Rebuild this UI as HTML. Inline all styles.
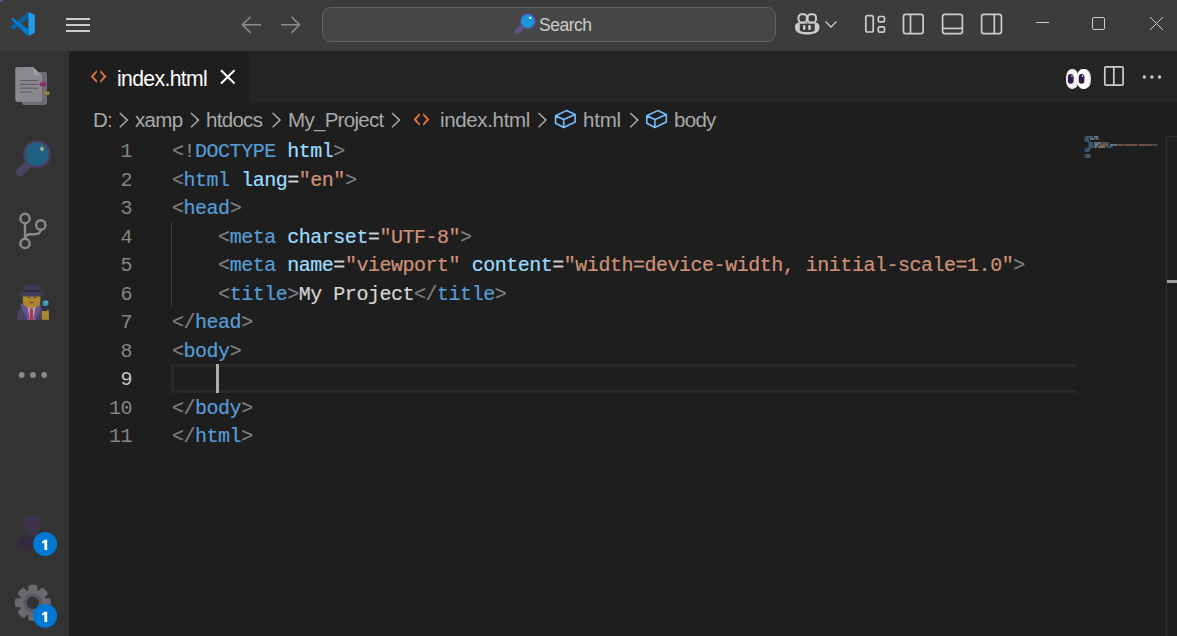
<!DOCTYPE html>
<html><head><meta charset="utf-8">
<style>
*{margin:0;padding:0;box-sizing:border-box}
html,body{width:1177px;height:636px;overflow:hidden;background:#1e1e1e;font-family:"Liberation Sans",sans-serif}
.abs{position:absolute}
svg{position:absolute;overflow:visible}
#title{position:absolute;left:0;top:0;width:1177px;height:51px;background:#3c3c3c}
#act{position:absolute;left:0;top:51px;width:69px;height:585px;background:#333333}
#tabs{position:absolute;left:69px;top:51px;width:1108px;height:52px;background:#252526}
#tab{position:absolute;left:0;top:0;width:180px;height:52px;background:#1e1e1e}
.code{position:absolute;left:172px;font-family:"Liberation Mono",monospace;font-size:20px;letter-spacing:-0.48px;white-space:pre;color:#d4d4d4;line-height:28.5px;-webkit-text-stroke:0.2px currentColor}
.ln{position:absolute;left:69px;width:63px;text-align:right;font-family:"Liberation Mono",monospace;font-size:20px;letter-spacing:-0.48px;color:#858585;line-height:28.5px}
.b{color:#808080}.t{color:#569cd6}.a{color:#9cdcfe}.s{color:#ce9178}
.ui{position:absolute;font-family:"Liberation Sans",sans-serif;font-size:20.5px;letter-spacing:-0.7px;line-height:22px;white-space:pre;color:#a9a9a9}
</style></head><body>
<div id="title"></div>
<div id="act"></div>
<div id="tabs"><div id="tab"></div></div>

<!-- ===== TITLE BAR ===== -->
<div class="abs" style="left:-2px;top:-2px;width:5px;height:4px;border-radius:0 0 3px 0;background:#5a5a98"></div>
<svg style="left:0;top:0" width="40" height="50" viewBox="0 0 40 50">
  <polygon points="28.5,12 28.5,17.6 15.2,28.4 13,29.8 11,28 11.2,26.6" fill="#0065a9"/>
  <polygon points="11,19.6 13,17.8 28.5,29.5 28.5,35.7 26.5,35" fill="#007acc"/>
  <polygon points="28.5,11.9 34.8,15.1 34.8,32.8 28.5,35.8" fill="#1f9cf0"/>
</svg>
<div class="abs" style="left:66px;top:18px;width:24px;height:2px;background:#cccccc"></div>
<div class="abs" style="left:66px;top:24px;width:24px;height:2px;background:#cccccc"></div>
<div class="abs" style="left:66px;top:30px;width:24px;height:2px;background:#cccccc"></div>

<svg style="left:0;top:0" width="1177" height="51" viewBox="0 0 1177 51">
  <g stroke="#8b8b8b" stroke-width="1.6" fill="none" stroke-linecap="butt">
    <path d="M261,24.8 H242.5 M250.5,16.8 L242.5,24.8 L250.5,32.8"/>
    <path d="M281,24.8 H299.5 M291.5,16.8 L299.5,24.8 L291.5,32.8"/>
  </g>
</svg>
<div class="abs" style="left:322px;top:7px;width:454px;height:35px;border:1px solid #636363;border-radius:9px;background:#464646"></div>
<svg style="left:510px;top:10px" width="30" height="30" viewBox="0 0 30 30">
  <line x1="7.3" y1="21.3" x2="11.5" y2="17.5" stroke="#5e5490" stroke-width="5" stroke-linecap="round"/>
  <circle cx="17.8" cy="11.2" r="7.4" fill="#1a95d8" stroke="#5a4a8c" stroke-width="1.4"/>
  <ellipse cx="20.2" cy="7.8" rx="1.2" ry="1.1" fill="#ffffff"/>
</svg>
<div class="ui" style="left:539px;top:13.5px;font-size:17.5px;letter-spacing:-0.5px;color:#cccccc">Search</div>

<!-- copilot -->
<svg style="left:790px;top:10px" width="50" height="30" viewBox="0 0 50 30">
  <g stroke="#cccccc" stroke-width="2" fill="none">
    <rect x="8.5" y="4.3" width="8.4" height="8.3" rx="3.2"/>
    <rect x="17.6" y="4.3" width="8.4" height="8.3" rx="3.2"/>
  </g>
  <path fill-rule="evenodd" fill="#cccccc" d="M5,17.5 C5,13.6 7,12.6 10,12.6 H24.5 C27.5,12.6 29.5,13.6 29.5,17.5 C29.5,22 25,24.6 17.3,24.6 C9.5,24.6 5,22 5,17.5 Z M9.8,13.6 H24.7 V20 C24.7,21.6 21.5,22.1 17.3,22.1 C13,22.1 9.8,21.6 9.8,20 Z"/>
  <rect x="13" y="15" width="2.4" height="5" rx="1.2" fill="#cccccc"/>
  <rect x="18.2" y="15" width="2.6" height="5" rx="1.2" fill="#cccccc"/>
  <path d="M35.5,11.5 L41,17 L46.5,11.5" stroke="#cccccc" stroke-width="1.4" fill="none"/>
</svg>

<!-- layout icons -->
<svg style="left:0;top:0" width="1177" height="51" viewBox="0 0 1177 51">
  <g stroke="#cccccc" stroke-width="1.7" fill="none">
    <rect x="865.8" y="15.6" width="7.4" height="16.4" rx="1.8"/>
    <rect x="878.3" y="16.5" width="6.2" height="5.4" rx="1.4"/>
    <rect x="878.3" y="26.8" width="6.2" height="5.4" rx="1.4"/>
    <rect x="903.5" y="14.3" width="19.6" height="19.4" rx="2.2"/>
    <line x1="910.5" y1="14.3" x2="910.5" y2="33.7"/>
    <rect x="942.6" y="14.3" width="19.8" height="19.4" rx="2.2"/>
    <line x1="942.6" y1="28.4" x2="962.4" y2="28.4"/>
    <rect x="981.6" y="14.3" width="19.8" height="19.4" rx="2.2"/>
    <line x1="994.3" y1="14.3" x2="994.3" y2="33.7"/>
  </g>
  <g stroke="#cccccc" stroke-width="1" fill="none">
    <line x1="1036" y1="22.5" x2="1049" y2="22.5"/>
    <rect x="1092.5" y="17.5" width="12" height="12" rx="1.5"/>
    <path d="M1150,17 L1163,30 M1163,17 L1150,30"/>
  </g>
</svg>

<!-- ===== TAB BAR ===== -->
<svg style="left:0;top:0" width="200" height="100" viewBox="0 0 200 100"><path d="M96.8,69.9 L90.7,76.4 L96.8,82.9 L96.8,80.4 L93.3,76.4 L96.8,72.4 Z M100.3,69.9 L106.4,76.4 L100.3,82.9 L100.3,80.4 L103.8,76.4 L100.3,72.4 Z" fill="#e8773a"/></svg>
<div class="ui" style="left:117px;top:67.5px;color:#ffffff;font-size:21.2px;letter-spacing:-0.65px">index.html</div>
<svg style="left:215px;top:62px" width="30" height="30" viewBox="0 0 30 30">
  <path d="M6,8.3 L19.5,21.5 M19.5,8.3 L6,21.5" stroke="#ffffff" stroke-width="2" fill="none"/>
</svg>

<!-- eyes emoji -->
<svg style="left:1060px;top:60px" width="40" height="36" viewBox="0 0 40 36">
  <rect x="6" y="9" width="12.6" height="20" rx="6" ry="8.5" fill="#f2f2f2"/>
  <rect x="17" y="9" width="14" height="20" rx="6.5" ry="8.5" fill="#d8d8d8"/>
  <rect x="17" y="9" width="12.6" height="20" rx="6" ry="8.5" fill="#ffffff"/>
  <rect x="7.9" y="13.9" width="5.7" height="9.9" rx="2.8" ry="3.2" fill="#351a4a"/>
  <rect x="18.7" y="13.9" width="5.7" height="9.9" rx="2.8" ry="3.2" fill="#351a4a"/>
  <circle cx="12" cy="16" r="0.8" fill="#fff"/>
  <circle cx="22.6" cy="16" r="0.8" fill="#fff"/>
</svg>
<svg style="left:1100px;top:60px" width="30" height="30" viewBox="0 0 30 30">
  <g stroke="#cccccc" stroke-width="1.7" fill="none">
    <rect x="4.8" y="6.9" width="18.3" height="18.3" rx="1.3"/>
    <line x1="13.8" y1="6.9" x2="13.8" y2="25.2"/>
  </g>
</svg>
<svg style="left:1135px;top:67px" width="30" height="20" viewBox="0 0 30 20">
  <circle cx="9.3" cy="10" r="1.7" fill="#cccccc"/>
  <circle cx="16.9" cy="10" r="1.7" fill="#cccccc"/>
  <circle cx="24.5" cy="10" r="1.7" fill="#cccccc"/>
</svg>

<!-- ===== BREADCRUMBS ===== -->
<div class="ui" style="left:93px;top:109px">D:</div>
<div class="ui" style="left:135px;top:109px">xamp</div>
<div class="ui" style="left:206px;top:109px">htdocs</div>
<div class="ui" style="left:288px;top:109px">My_Project</div>
<div class="ui" style="left:440px;top:109px;letter-spacing:-0.35px">index.html</div>
<div class="ui" style="left:583px;top:109px;letter-spacing:-0.2px">html</div>
<div class="ui" style="left:674px;top:109px">body</div>
<svg style="left:0;top:103px" width="800" height="32" viewBox="0 0 800 32">
  <g stroke="#a9a9a9" stroke-width="1.5" fill="none">
    <path d="M119.8,10 L127.3,17.1 L119.8,24.2"/>
    <path d="M191,10 L198.5,17.1 L191,24.2"/>
    <path d="M272.6,10 L280.1,17.1 L272.6,24.2"/>
    <path d="M392,10 L399.5,17.1 L392,24.2"/>
    <path d="M538.5,10 L546.0,17.1 L538.5,24.2"/>
    <path d="M630.3,10 L637.8,17.1 L630.3,24.2"/>
  </g>
  <path d="M419.7,9.9 L413.6,16.4 L419.7,22.9 L419.7,20.4 L416.2,16.4 L419.7,12.4 Z M423.2,9.9 L429.3,16.4 L423.2,22.9 L423.2,20.4 L426.7,16.4 L423.2,12.4 Z" fill="#e8773a"/>
  <g stroke="#75beff" stroke-width="1.6" fill="none" stroke-linejoin="round">
    <path d="M555.6,12.8 L566.5,7.6 L575.1,11.6 L575.1,19.0 L563.7,24.5 L555.6,20.3 Z M555.6,12.8 L563.7,16.4 L575.1,11.6 M563.7,16.4 L563.7,24.5"/>
    <path d="M646.8,12.8 L657.7,7.6 L666.3,11.6 L666.3,19.0 L654.9,24.5 L646.8,20.3 Z M646.8,12.8 L654.9,16.4 L666.3,11.6 M654.9,16.4 L654.9,24.5"/>
  </g>
</svg>

<!-- ===== EDITOR ===== -->
<div class="abs" style="left:171px;top:222px;width:1px;height:85px;background:#404040"></div>
<div class="abs" style="left:171px;top:364px;width:906px;height:29px;border:3px solid #282828;border-right:none"></div>
<div class="abs" style="left:216px;top:364px;width:3px;height:29px;background:#aeafad"></div>

<div class="ln" style="top:138.0px">1</div>
<div class="ln" style="top:166.5px">2</div>
<div class="ln" style="top:195.0px">3</div>
<div class="ln" style="top:223.5px">4</div>
<div class="ln" style="top:252.0px">5</div>
<div class="ln" style="top:280.5px">6</div>
<div class="ln" style="top:309.0px">7</div>
<div class="ln" style="top:337.5px">8</div>
<div class="ln" style="top:366.0px;color:#c6c6c6">9</div>
<div class="ln" style="top:394.5px">10</div>
<div class="ln" style="top:423.0px">11</div>

<div class="code" style="top:138px"><span class="b">&lt;!</span><span class="t">DOCTYPE</span> <span class="a">html</span><span class="b">&gt;</span>
<span class="b">&lt;</span><span class="t">html</span> <span class="a">lang</span>=<span class="s">"en"</span><span class="b">&gt;</span>
<span class="b">&lt;</span><span class="t">head</span><span class="b">&gt;</span>
    <span class="b">&lt;</span><span class="t">meta</span> <span class="a">charset</span>=<span class="s">"UTF-8"</span><span class="b">&gt;</span>
    <span class="b">&lt;</span><span class="t">meta</span> <span class="a">name</span>=<span class="s">"viewport"</span> <span class="a">content</span>=<span class="s">"width=device-width, initial-scale=1.0"</span><span class="b">&gt;</span>
    <span class="b">&lt;</span><span class="t">title</span><span class="b">&gt;</span>My Project<span class="b">&lt;/</span><span class="t">title</span><span class="b">&gt;</span>
<span class="b">&lt;/</span><span class="t">head</span><span class="b">&gt;</span>
<span class="b">&lt;</span><span class="t">body</span><span class="b">&gt;</span>

<span class="b">&lt;/</span><span class="t">body</span><span class="b">&gt;</span>
<span class="b">&lt;/</span><span class="t">html</span><span class="b">&gt;</span></div>

<!-- scrollbar / overview ruler -->
<div class="abs" style="left:1166px;top:136px;width:1px;height:500px;background:#2f2f2f"></div>
<div class="abs" style="left:1166px;top:136px;width:11px;height:1px;background:#2f2f2f"></div>
<div class="abs" style="left:1167px;top:280px;width:10px;height:3px;background:#a0a0a0"></div>

<!-- ===== ACTIVITY BAR ICONS ===== -->
<svg style="left:0;top:51px" width="69" height="585" viewBox="0 51 69 585">
  <!-- explorer: documents -->
  <rect x="22" y="72" width="25" height="33" rx="2.2" fill="#6f6c72"/>
  <path d="M17.5,67 H33.2 L42,75.8 V99.6 A2.3,2.3 0 0 1 39.7,101.9 H17.5 A2.3,2.3 0 0 1 15.2,99.6 V69.3 A2.3,2.3 0 0 1 17.5,67 Z" fill="#8a878d"/>
  <path d="M33.2,67 L42,75.8 H35 A1.8,1.8 0 0 1 33.2,74 Z" fill="#9c999f"/>
  <g stroke="#5f5c62" stroke-width="1.1">
    <line x1="20.3" y1="80.5" x2="38" y2="80.5"/>
    <line x1="20.3" y1="84.4" x2="38" y2="84.4"/>
    <line x1="20.3" y1="88.2" x2="38" y2="88.2"/>
    <line x1="20.3" y1="92" x2="31.7" y2="92"/>
  </g>
  <path d="M39,84.3 L41,82.3 H45.8 V86.3 H41 Z" fill="#8e2a6b"/>
  <path d="M43.2,93.2 L45,91.5 H49.5 V95 H45 Z" fill="#9a7f3a"/>

  <!-- search: magnifier emoji -->
  <line x1="20" y1="172" x2="27" y2="165.5" stroke="#4a4563" stroke-width="8.5" stroke-linecap="round"/>
  <circle cx="36.9" cy="154.2" r="12.8" fill="#1f5f7f" stroke="#4a3f63" stroke-width="2.2"/>
  <ellipse cx="42" cy="148.8" rx="1.8" ry="2.2" fill="#b5a88a" transform="rotate(-30 42 148.8)"/>

  <!-- source control -->
  <g stroke="#8a8a8a" stroke-width="2.4" fill="none">
    <circle cx="25" cy="218.4" r="4.7"/>
    <circle cx="25" cy="243.4" r="4.7"/>
    <circle cx="40.8" cy="225" r="4.7"/>
    <line x1="25" y1="223.3" x2="25" y2="238.5"/>
    <path d="M40.8,229.7 C40.5,232.5 38.5,234.2 35,234.2 L30.5,234.2 C27.5,234.2 25.3,235.6 25,238.7"/>
  </g>

  <!-- detective emoji -->
  <path d="M16.8,319.8 L17.5,313 Q18.5,309 23,307 L27.5,305.5 H36 L40.5,307 Q42.3,309 42.3,313 L42.3,319.8 Z" fill="#4a4561"/>
  <path d="M27.2,306.5 H36 V319.8 H27.2 Z" fill="#a9a8b0"/>
  <path d="M30,310 H32.9 L33.2,319.8 H29.7 Z" fill="#b03050"/>
  <path d="M30.2,308 H32.7 L32.3,310.5 H30.6 Z" fill="#b03050"/>
  <path d="M20,303.7 L23.5,303.4 L27.6,308 L29.8,319.8 H27.8 L21.8,309 Z" fill="#6a4f8c"/>
  <path d="M40.4,303.7 L38.5,303.4 L35.5,308 L33.2,319.8 H35.4 L41,309 Z" fill="#6a4f8c"/>
  <path d="M22.8,296.2 H40.4 V301 Q40.2,305.5 37.5,306.8 L35.4,307.5 H28.5 L25.5,306.8 Q23,305.5 22.8,301 Z" fill="#a9872e"/>
  <rect x="28.2" y="297" width="1.6" height="1.2" fill="#3a3040"/>
  <rect x="34.1" y="297" width="1.6" height="1.2" fill="#3a3040"/>
  <path d="M29,302 Q31.5,304.5 34,302 Z" fill="#8a3040"/>
  <path d="M23.4,292 L24,286 Q25,284.5 27,284.5 Q30,285.5 31.9,286.5 Q34,285.5 37,284.5 Q39,284.5 39.8,286 L40.4,292 Z" fill="#3f3a57"/>
  <rect x="23.6" y="289.9" width="16.6" height="2.2" fill="#2e2840"/>
  <path d="M19.3,294 Q19.3,292 21.5,292 H41.7 Q43.9,292 43.9,294 V296.2 H19.3 Z" fill="#3f3a57"/>
  <rect x="44.2" y="305.5" width="2.5" height="6" fill="#3a2a48"/>
  <path d="M42,311 H46.8 L47.2,309.8 Q48.9,309.8 48.9,311.5 V319.7 H42 Z" fill="#a9872e"/>
  <circle cx="45.4" cy="303.1" r="3.7" fill="#2a9aa8" stroke="#3a2a48" stroke-width="1.1"/>
  <circle cx="46.4" cy="302.4" r="0.8" fill="#c8b8c8"/>

  <!-- more dots -->
  <circle cx="21.7" cy="375" r="2.9" fill="#8a8a8a"/>
  <circle cx="33" cy="375" r="2.9" fill="#8a8a8a"/>
  <circle cx="44.2" cy="375" r="2.9" fill="#8a8a8a"/>

  <!-- accounts -->
  <path d="M16.3,547.8 L16.8,543.5 Q17.8,538.8 23.5,537.3 L28.5,536 H37 L41,537.5 V547.8 Z" fill="#33293f"/>
  <path d="M23.9,519.5 Q24,515.2 27.5,515.2 H36.5 Q39.9,515.2 39.9,519.5 V523 Q41.5,523.5 41.4,525.3 Q41,527.8 39.4,528.1 Q38.5,534 31.9,537 Q25.3,534 24.4,528.1 Q22.6,527.8 22.3,525.3 Q22.2,523.5 23.9,523 Z" fill="#3d3348"/>
  <circle cx="45.1" cy="543.9" r="12" fill="#0078d4"/>
  <!-- gear -->
  <g fill="#6b696e">
    <circle cx="32.8" cy="602.8" r="13"/>
    <g id="teeth">
      <rect x="28.3" y="584.8" width="9" height="8" rx="2.5"/>
      <rect x="28.3" y="612.8" width="9" height="8" rx="2.5"/>
      <rect x="14.8" y="598.3" width="8" height="9" rx="2.5"/>
      <rect x="42.8" y="598.3" width="8" height="9" rx="2.5"/>
    </g>
    <g transform="rotate(45 32.8 602.8)">
      <rect x="28.3" y="584.8" width="9" height="8" rx="2.5"/>
      <rect x="28.3" y="612.8" width="9" height="8" rx="2.5"/>
      <rect x="14.8" y="598.3" width="8" height="9" rx="2.5"/>
      <rect x="42.8" y="598.3" width="8" height="9" rx="2.5"/>
    </g>
  </g>
  <circle cx="32.8" cy="602.8" r="8" fill="#333333" stroke="#5d5b61" stroke-width="3.5"/>
  <circle cx="45.1" cy="615.8" r="12" fill="#0078d4"/>
</svg>
<svg style="left:0;top:0" width="69" height="636" viewBox="0 0 69 636">
  <path d="M44.4,539.8 H47.2 V550.1 H44.4 V542.7 L42.1,543.5 V541.7 Z" fill="#ffffff"/>
  <path d="M44.4,611.7 H47.2 V622 H44.4 V614.6 L42.1,615.4 V613.6 Z" fill="#ffffff"/>
</svg>

<!-- ===== MINIMAP ===== -->
<svg style="left:1084px;top:136px" width="80" height="24" viewBox="0 0 80 24">
<rect x="0" y="0.2" width="1" height="1.5" fill="#808080" fill-opacity="0.35"/>
<rect x="1" y="0.2" width="1" height="1.5" fill="#808080" fill-opacity="0.35"/>
<rect x="2" y="0.2" width="1" height="1.5" fill="#569cd6" fill-opacity="0.6"/>
<rect x="3" y="0.2" width="1" height="1.5" fill="#569cd6" fill-opacity="0.6"/>
<rect x="4" y="0.2" width="1" height="1.5" fill="#569cd6" fill-opacity="0.6"/>
<rect x="5" y="0.2" width="1" height="1.5" fill="#569cd6" fill-opacity="0.6"/>
<rect x="6" y="0.2" width="1" height="1.5" fill="#569cd6" fill-opacity="0.6"/>
<rect x="7" y="0.2" width="1" height="1.5" fill="#569cd6" fill-opacity="0.6"/>
<rect x="8" y="0.2" width="1" height="1.5" fill="#569cd6" fill-opacity="0.6"/>
<rect x="10" y="0.2" width="1" height="1.5" fill="#9cdcfe" fill-opacity="0.6"/>
<rect x="11" y="0.2" width="1" height="1.5" fill="#9cdcfe" fill-opacity="0.6"/>
<rect x="12" y="0.2" width="1" height="1.5" fill="#9cdcfe" fill-opacity="0.7"/>
<rect x="13" y="0.2" width="1" height="1.5" fill="#9cdcfe" fill-opacity="0.6"/>
<rect x="14" y="0.2" width="1" height="1.5" fill="#808080" fill-opacity="0.35"/>
<rect x="0" y="2.2" width="1" height="1.5" fill="#808080" fill-opacity="0.35"/>
<rect x="1" y="2.2" width="1" height="1.5" fill="#569cd6" fill-opacity="0.6"/>
<rect x="2" y="2.2" width="1" height="1.5" fill="#569cd6" fill-opacity="0.6"/>
<rect x="3" y="2.2" width="1" height="1.5" fill="#569cd6" fill-opacity="0.7"/>
<rect x="4" y="2.2" width="1" height="1.5" fill="#569cd6" fill-opacity="0.6"/>
<rect x="6" y="2.2" width="1" height="1.5" fill="#9cdcfe" fill-opacity="0.6"/>
<rect x="7" y="2.2" width="1" height="1.5" fill="#9cdcfe" fill-opacity="0.6"/>
<rect x="8" y="2.2" width="1" height="1.5" fill="#9cdcfe" fill-opacity="0.6"/>
<rect x="9" y="2.2" width="1" height="1.5" fill="#9cdcfe" fill-opacity="0.6"/>
<rect x="10" y="2.2" width="1" height="1.5" fill="#d4d4d4" fill-opacity="0.35"/>
<rect x="11" y="2.2" width="1" height="1.5" fill="#ce9178" fill-opacity="0.35"/>
<rect x="12" y="2.2" width="1" height="1.5" fill="#ce9178" fill-opacity="0.6"/>
<rect x="13" y="2.2" width="1" height="1.5" fill="#ce9178" fill-opacity="0.6"/>
<rect x="14" y="2.2" width="1" height="1.5" fill="#ce9178" fill-opacity="0.35"/>
<rect x="15" y="2.2" width="1" height="1.5" fill="#808080" fill-opacity="0.35"/>
<rect x="0" y="4.2" width="1" height="1.5" fill="#808080" fill-opacity="0.35"/>
<rect x="1" y="4.2" width="1" height="1.5" fill="#569cd6" fill-opacity="0.6"/>
<rect x="2" y="4.2" width="1" height="1.5" fill="#569cd6" fill-opacity="0.6"/>
<rect x="3" y="4.2" width="1" height="1.5" fill="#569cd6" fill-opacity="0.6"/>
<rect x="4" y="4.2" width="1" height="1.5" fill="#569cd6" fill-opacity="0.6"/>
<rect x="5" y="4.2" width="1" height="1.5" fill="#808080" fill-opacity="0.35"/>
<rect x="4" y="6.2" width="1" height="1.5" fill="#808080" fill-opacity="0.35"/>
<rect x="5" y="6.2" width="1" height="1.5" fill="#569cd6" fill-opacity="0.7"/>
<rect x="6" y="6.2" width="1" height="1.5" fill="#569cd6" fill-opacity="0.6"/>
<rect x="7" y="6.2" width="1" height="1.5" fill="#569cd6" fill-opacity="0.6"/>
<rect x="8" y="6.2" width="1" height="1.5" fill="#569cd6" fill-opacity="0.6"/>
<rect x="10" y="6.2" width="1" height="1.5" fill="#9cdcfe" fill-opacity="0.6"/>
<rect x="11" y="6.2" width="1" height="1.5" fill="#9cdcfe" fill-opacity="0.6"/>
<rect x="12" y="6.2" width="1" height="1.5" fill="#9cdcfe" fill-opacity="0.6"/>
<rect x="13" y="6.2" width="1" height="1.5" fill="#9cdcfe" fill-opacity="0.6"/>
<rect x="14" y="6.2" width="1" height="1.5" fill="#9cdcfe" fill-opacity="0.6"/>
<rect x="15" y="6.2" width="1" height="1.5" fill="#9cdcfe" fill-opacity="0.6"/>
<rect x="16" y="6.2" width="1" height="1.5" fill="#9cdcfe" fill-opacity="0.6"/>
<rect x="17" y="6.2" width="1" height="1.5" fill="#d4d4d4" fill-opacity="0.35"/>
<rect x="18" y="6.2" width="1" height="1.5" fill="#ce9178" fill-opacity="0.35"/>
<rect x="19" y="6.2" width="1" height="1.5" fill="#ce9178" fill-opacity="0.6"/>
<rect x="20" y="6.2" width="1" height="1.5" fill="#ce9178" fill-opacity="0.6"/>
<rect x="21" y="6.2" width="1" height="1.5" fill="#ce9178" fill-opacity="0.6"/>
<rect x="22" y="6.2" width="1" height="1.5" fill="#ce9178" fill-opacity="0.35"/>
<rect x="23" y="6.2" width="1" height="1.5" fill="#ce9178" fill-opacity="0.6"/>
<rect x="24" y="6.2" width="1" height="1.5" fill="#ce9178" fill-opacity="0.35"/>
<rect x="25" y="6.2" width="1" height="1.5" fill="#808080" fill-opacity="0.35"/>
<rect x="4" y="8.2" width="1" height="1.5" fill="#808080" fill-opacity="0.35"/>
<rect x="5" y="8.2" width="1" height="1.5" fill="#569cd6" fill-opacity="0.7"/>
<rect x="6" y="8.2" width="1" height="1.5" fill="#569cd6" fill-opacity="0.6"/>
<rect x="7" y="8.2" width="1" height="1.5" fill="#569cd6" fill-opacity="0.6"/>
<rect x="8" y="8.2" width="1" height="1.5" fill="#569cd6" fill-opacity="0.6"/>
<rect x="10" y="8.2" width="1" height="1.5" fill="#9cdcfe" fill-opacity="0.6"/>
<rect x="11" y="8.2" width="1" height="1.5" fill="#9cdcfe" fill-opacity="0.6"/>
<rect x="12" y="8.2" width="1" height="1.5" fill="#9cdcfe" fill-opacity="0.7"/>
<rect x="13" y="8.2" width="1" height="1.5" fill="#9cdcfe" fill-opacity="0.6"/>
<rect x="14" y="8.2" width="1" height="1.5" fill="#d4d4d4" fill-opacity="0.35"/>
<rect x="15" y="8.2" width="1" height="1.5" fill="#ce9178" fill-opacity="0.35"/>
<rect x="16" y="8.2" width="1" height="1.5" fill="#ce9178" fill-opacity="0.6"/>
<rect x="17" y="8.2" width="1" height="1.5" fill="#ce9178" fill-opacity="0.6"/>
<rect x="18" y="8.2" width="1" height="1.5" fill="#ce9178" fill-opacity="0.6"/>
<rect x="19" y="8.2" width="1" height="1.5" fill="#ce9178" fill-opacity="0.7"/>
<rect x="20" y="8.2" width="1" height="1.5" fill="#ce9178" fill-opacity="0.6"/>
<rect x="21" y="8.2" width="1" height="1.5" fill="#ce9178" fill-opacity="0.6"/>
<rect x="22" y="8.2" width="1" height="1.5" fill="#ce9178" fill-opacity="0.6"/>
<rect x="23" y="8.2" width="1" height="1.5" fill="#ce9178" fill-opacity="0.6"/>
<rect x="24" y="8.2" width="1" height="1.5" fill="#ce9178" fill-opacity="0.35"/>
<rect x="26" y="8.2" width="1" height="1.5" fill="#9cdcfe" fill-opacity="0.6"/>
<rect x="27" y="8.2" width="1" height="1.5" fill="#9cdcfe" fill-opacity="0.6"/>
<rect x="28" y="8.2" width="1" height="1.5" fill="#9cdcfe" fill-opacity="0.6"/>
<rect x="29" y="8.2" width="1" height="1.5" fill="#9cdcfe" fill-opacity="0.6"/>
<rect x="30" y="8.2" width="1" height="1.5" fill="#9cdcfe" fill-opacity="0.6"/>
<rect x="31" y="8.2" width="1" height="1.5" fill="#9cdcfe" fill-opacity="0.6"/>
<rect x="32" y="8.2" width="1" height="1.5" fill="#9cdcfe" fill-opacity="0.6"/>
<rect x="33" y="8.2" width="1" height="1.5" fill="#d4d4d4" fill-opacity="0.35"/>
<rect x="34" y="8.2" width="1" height="1.5" fill="#ce9178" fill-opacity="0.35"/>
<rect x="35" y="8.2" width="1" height="1.5" fill="#ce9178" fill-opacity="0.7"/>
<rect x="36" y="8.2" width="1" height="1.5" fill="#ce9178" fill-opacity="0.6"/>
<rect x="37" y="8.2" width="1" height="1.5" fill="#ce9178" fill-opacity="0.6"/>
<rect x="38" y="8.2" width="1" height="1.5" fill="#ce9178" fill-opacity="0.6"/>
<rect x="39" y="8.2" width="1" height="1.5" fill="#ce9178" fill-opacity="0.6"/>
<rect x="40" y="8.2" width="1" height="1.5" fill="#ce9178" fill-opacity="0.35"/>
<rect x="41" y="8.2" width="1" height="1.5" fill="#ce9178" fill-opacity="0.6"/>
<rect x="42" y="8.2" width="1" height="1.5" fill="#ce9178" fill-opacity="0.6"/>
<rect x="43" y="8.2" width="1" height="1.5" fill="#ce9178" fill-opacity="0.6"/>
<rect x="44" y="8.2" width="1" height="1.5" fill="#ce9178" fill-opacity="0.6"/>
<rect x="45" y="8.2" width="1" height="1.5" fill="#ce9178" fill-opacity="0.6"/>
<rect x="46" y="8.2" width="1" height="1.5" fill="#ce9178" fill-opacity="0.6"/>
<rect x="47" y="8.2" width="1" height="1.5" fill="#ce9178" fill-opacity="0.35"/>
<rect x="48" y="8.2" width="1" height="1.5" fill="#ce9178" fill-opacity="0.7"/>
<rect x="49" y="8.2" width="1" height="1.5" fill="#ce9178" fill-opacity="0.6"/>
<rect x="50" y="8.2" width="1" height="1.5" fill="#ce9178" fill-opacity="0.6"/>
<rect x="51" y="8.2" width="1" height="1.5" fill="#ce9178" fill-opacity="0.6"/>
<rect x="52" y="8.2" width="1" height="1.5" fill="#ce9178" fill-opacity="0.6"/>
<rect x="53" y="8.2" width="1" height="1.5" fill="#ce9178" fill-opacity="0.35"/>
<rect x="55" y="8.2" width="1" height="1.5" fill="#ce9178" fill-opacity="0.6"/>
<rect x="56" y="8.2" width="1" height="1.5" fill="#ce9178" fill-opacity="0.6"/>
<rect x="57" y="8.2" width="1" height="1.5" fill="#ce9178" fill-opacity="0.6"/>
<rect x="58" y="8.2" width="1" height="1.5" fill="#ce9178" fill-opacity="0.6"/>
<rect x="59" y="8.2" width="1" height="1.5" fill="#ce9178" fill-opacity="0.6"/>
<rect x="60" y="8.2" width="1" height="1.5" fill="#ce9178" fill-opacity="0.6"/>
<rect x="61" y="8.2" width="1" height="1.5" fill="#ce9178" fill-opacity="0.6"/>
<rect x="62" y="8.2" width="1" height="1.5" fill="#ce9178" fill-opacity="0.35"/>
<rect x="63" y="8.2" width="1" height="1.5" fill="#ce9178" fill-opacity="0.6"/>
<rect x="64" y="8.2" width="1" height="1.5" fill="#ce9178" fill-opacity="0.6"/>
<rect x="65" y="8.2" width="1" height="1.5" fill="#ce9178" fill-opacity="0.6"/>
<rect x="66" y="8.2" width="1" height="1.5" fill="#ce9178" fill-opacity="0.6"/>
<rect x="67" y="8.2" width="1" height="1.5" fill="#ce9178" fill-opacity="0.6"/>
<rect x="68" y="8.2" width="1" height="1.5" fill="#ce9178" fill-opacity="0.35"/>
<rect x="69" y="8.2" width="1" height="1.5" fill="#ce9178" fill-opacity="0.6"/>
<rect x="70" y="8.2" width="1" height="1.5" fill="#ce9178" fill-opacity="0.35"/>
<rect x="71" y="8.2" width="1" height="1.5" fill="#ce9178" fill-opacity="0.6"/>
<rect x="72" y="8.2" width="1" height="1.5" fill="#ce9178" fill-opacity="0.35"/>
<rect x="73" y="8.2" width="1" height="1.5" fill="#808080" fill-opacity="0.35"/>
<rect x="4" y="10.2" width="1" height="1.5" fill="#808080" fill-opacity="0.35"/>
<rect x="5" y="10.2" width="1" height="1.5" fill="#569cd6" fill-opacity="0.6"/>
<rect x="6" y="10.2" width="1" height="1.5" fill="#569cd6" fill-opacity="0.6"/>
<rect x="7" y="10.2" width="1" height="1.5" fill="#569cd6" fill-opacity="0.6"/>
<rect x="8" y="10.2" width="1" height="1.5" fill="#569cd6" fill-opacity="0.6"/>
<rect x="9" y="10.2" width="1" height="1.5" fill="#569cd6" fill-opacity="0.6"/>
<rect x="10" y="10.2" width="1" height="1.5" fill="#808080" fill-opacity="0.35"/>
<rect x="11" y="10.2" width="1" height="1.5" fill="#d4d4d4" fill-opacity="0.7"/>
<rect x="12" y="10.2" width="1" height="1.5" fill="#d4d4d4" fill-opacity="0.6"/>
<rect x="14" y="10.2" width="1" height="1.5" fill="#d4d4d4" fill-opacity="0.6"/>
<rect x="15" y="10.2" width="1" height="1.5" fill="#d4d4d4" fill-opacity="0.6"/>
<rect x="16" y="10.2" width="1" height="1.5" fill="#d4d4d4" fill-opacity="0.6"/>
<rect x="17" y="10.2" width="1" height="1.5" fill="#d4d4d4" fill-opacity="0.6"/>
<rect x="18" y="10.2" width="1" height="1.5" fill="#d4d4d4" fill-opacity="0.6"/>
<rect x="19" y="10.2" width="1" height="1.5" fill="#d4d4d4" fill-opacity="0.6"/>
<rect x="20" y="10.2" width="1" height="1.5" fill="#d4d4d4" fill-opacity="0.6"/>
<rect x="21" y="10.2" width="1" height="1.5" fill="#808080" fill-opacity="0.35"/>
<rect x="22" y="10.2" width="1" height="1.5" fill="#808080" fill-opacity="0.35"/>
<rect x="23" y="10.2" width="1" height="1.5" fill="#569cd6" fill-opacity="0.6"/>
<rect x="24" y="10.2" width="1" height="1.5" fill="#569cd6" fill-opacity="0.6"/>
<rect x="25" y="10.2" width="1" height="1.5" fill="#569cd6" fill-opacity="0.6"/>
<rect x="26" y="10.2" width="1" height="1.5" fill="#569cd6" fill-opacity="0.6"/>
<rect x="27" y="10.2" width="1" height="1.5" fill="#569cd6" fill-opacity="0.6"/>
<rect x="28" y="10.2" width="1" height="1.5" fill="#808080" fill-opacity="0.35"/>
<rect x="0" y="12.2" width="1" height="1.5" fill="#808080" fill-opacity="0.35"/>
<rect x="1" y="12.2" width="1" height="1.5" fill="#808080" fill-opacity="0.35"/>
<rect x="2" y="12.2" width="1" height="1.5" fill="#569cd6" fill-opacity="0.6"/>
<rect x="3" y="12.2" width="1" height="1.5" fill="#569cd6" fill-opacity="0.6"/>
<rect x="4" y="12.2" width="1" height="1.5" fill="#569cd6" fill-opacity="0.6"/>
<rect x="5" y="12.2" width="1" height="1.5" fill="#569cd6" fill-opacity="0.6"/>
<rect x="6" y="12.2" width="1" height="1.5" fill="#808080" fill-opacity="0.35"/>
<rect x="0" y="14.2" width="1" height="1.5" fill="#808080" fill-opacity="0.35"/>
<rect x="1" y="14.2" width="1" height="1.5" fill="#569cd6" fill-opacity="0.6"/>
<rect x="2" y="14.2" width="1" height="1.5" fill="#569cd6" fill-opacity="0.6"/>
<rect x="3" y="14.2" width="1" height="1.5" fill="#569cd6" fill-opacity="0.6"/>
<rect x="4" y="14.2" width="1" height="1.5" fill="#569cd6" fill-opacity="0.6"/>
<rect x="5" y="14.2" width="1" height="1.5" fill="#808080" fill-opacity="0.35"/>
<rect x="0" y="18.2" width="1" height="1.5" fill="#808080" fill-opacity="0.35"/>
<rect x="1" y="18.2" width="1" height="1.5" fill="#808080" fill-opacity="0.35"/>
<rect x="2" y="18.2" width="1" height="1.5" fill="#569cd6" fill-opacity="0.6"/>
<rect x="3" y="18.2" width="1" height="1.5" fill="#569cd6" fill-opacity="0.6"/>
<rect x="4" y="18.2" width="1" height="1.5" fill="#569cd6" fill-opacity="0.6"/>
<rect x="5" y="18.2" width="1" height="1.5" fill="#569cd6" fill-opacity="0.6"/>
<rect x="6" y="18.2" width="1" height="1.5" fill="#808080" fill-opacity="0.35"/>
<rect x="0" y="20.2" width="1" height="1.5" fill="#808080" fill-opacity="0.35"/>
<rect x="1" y="20.2" width="1" height="1.5" fill="#808080" fill-opacity="0.35"/>
<rect x="2" y="20.2" width="1" height="1.5" fill="#569cd6" fill-opacity="0.6"/>
<rect x="3" y="20.2" width="1" height="1.5" fill="#569cd6" fill-opacity="0.6"/>
<rect x="4" y="20.2" width="1" height="1.5" fill="#569cd6" fill-opacity="0.7"/>
<rect x="5" y="20.2" width="1" height="1.5" fill="#569cd6" fill-opacity="0.6"/>
<rect x="6" y="20.2" width="1" height="1.5" fill="#808080" fill-opacity="0.35"/>
</svg>
</body></html>
